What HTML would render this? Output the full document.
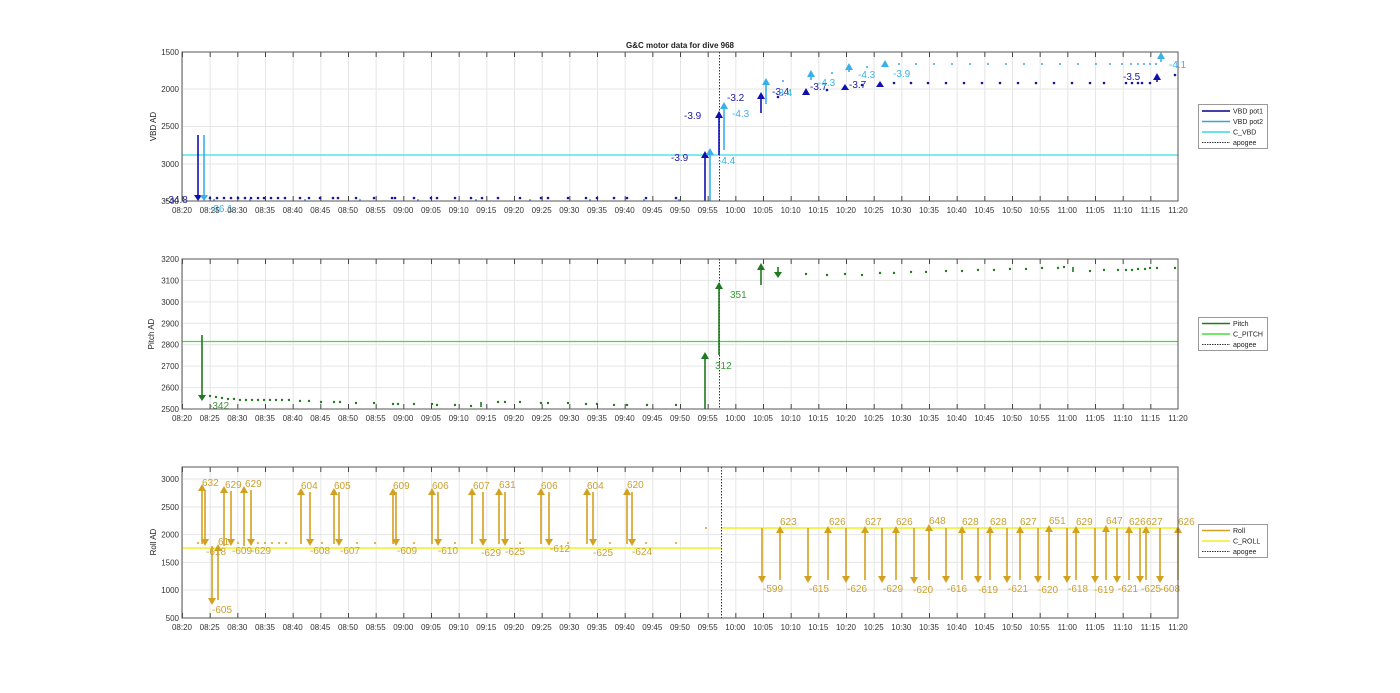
<!DOCTYPE html>
<html><head><meta charset="utf-8"><style>
html,body{margin:0;padding:0;background:#fff;width:1400px;height:693px;overflow:hidden}
svg{display:block;font-family:"Liberation Sans",sans-serif}
.t{font-size:8px;fill:#333}
.yl{font-size:8px;fill:#333}
.lg{font-size:7px;fill:#222}
</style></head><body>
<svg width="1400" height="693" viewBox="0 0 1400 693" xmlns="http://www.w3.org/2000/svg">
<defs>
<pattern id="vg" x="182" y="0" width="27.667" height="693" patternUnits="userSpaceOnUse"><line x1="0.5" y1="0" x2="0.5" y2="693" stroke="#e6e6e6" stroke-width="1"/></pattern>
<pattern id="tk1" x="182" y="52" width="27.667" height="149" patternUnits="userSpaceOnUse"><line x1="0.5" y1="0" x2="0.5" y2="5" stroke="#444"/><line x1="0.5" y1="144" x2="0.5" y2="149" stroke="#444"/></pattern>
<pattern id="tk2" x="182" y="259" width="27.667" height="150" patternUnits="userSpaceOnUse"><line x1="0.5" y1="0" x2="0.5" y2="5" stroke="#444"/><line x1="0.5" y1="145" x2="0.5" y2="150" stroke="#444"/></pattern>
<pattern id="tk3" x="182" y="467" width="27.667" height="151" patternUnits="userSpaceOnUse"><line x1="0.5" y1="0" x2="0.5" y2="5" stroke="#444"/><line x1="0.5" y1="146" x2="0.5" y2="151" stroke="#444"/></pattern>
</defs>

<text x="680" y="48" text-anchor="middle" style="font-size:8px;font-weight:bold" fill="#222">G&amp;C motor data for dive 968</text>

<!-- ===== Axes 1 ===== -->
<rect x="182" y="52" width="996" height="149" fill="url(#vg)"/>
<g stroke="#e6e6e6"><line x1="182" y1="89" x2="1178" y2="89"/><line x1="182" y1="126.5" x2="1178" y2="126.5"/><line x1="182" y1="164" x2="1178" y2="164"/></g>
<rect x="182" y="52" width="996" height="149" fill="url(#tk1)"/>
<line x1="182" y1="155" x2="1178" y2="155" stroke="#33dde6" stroke-width="1.2"/>
<line x1="719.5" y1="52" x2="719.5" y2="201" stroke="#333" stroke-dasharray="1.5,1.5"/>
<!-- dots pot1 -->
<g fill="#1515a0">
<circle cx="210" cy="198" r="1.3"/><circle cx="217" cy="198" r="1.3"/><circle cx="224" cy="198" r="1.3"/><circle cx="231" cy="198" r="1.3"/><circle cx="238" cy="198" r="1.3"/><circle cx="245" cy="198" r="1.3"/><circle cx="251" cy="198" r="1.3"/><circle cx="258" cy="198" r="1.3"/><circle cx="264" cy="198" r="1.3"/><circle cx="271" cy="198" r="1.3"/><circle cx="278" cy="198" r="1.3"/><circle cx="285" cy="198" r="1.3"/><circle cx="300" cy="198" r="1.3"/><circle cx="309" cy="198" r="1.3"/><circle cx="320" cy="198" r="1.3"/><circle cx="333" cy="198" r="1.3"/><circle cx="338" cy="198" r="1.3"/><circle cx="356" cy="198" r="1.3"/><circle cx="374" cy="198" r="1.3"/><circle cx="392" cy="198" r="1.3"/><circle cx="395" cy="198" r="1.3"/><circle cx="414" cy="198" r="1.3"/><circle cx="431" cy="198" r="1.3"/><circle cx="437" cy="198" r="1.3"/><circle cx="455" cy="198" r="1.3"/><circle cx="471" cy="198" r="1.3"/><circle cx="482" cy="198" r="1.3"/><circle cx="498" cy="198" r="1.3"/><circle cx="520" cy="198" r="1.3"/><circle cx="541" cy="198" r="1.3"/><circle cx="548" cy="198" r="1.3"/><circle cx="568" cy="198" r="1.3"/><circle cx="586" cy="198" r="1.3"/><circle cx="597" cy="198" r="1.3"/><circle cx="614" cy="198" r="1.3"/><circle cx="627" cy="198" r="1.3"/><circle cx="646" cy="198" r="1.3"/><circle cx="676" cy="198" r="1.3"/>
<circle cx="778" cy="97" r="1.3"/><circle cx="827" cy="90" r="1.3"/><circle cx="862" cy="85" r="1.3"/><circle cx="894" cy="83" r="1.3"/><circle cx="911" cy="83" r="1.3"/><circle cx="928" cy="83" r="1.3"/><circle cx="946" cy="83" r="1.3"/><circle cx="964" cy="83" r="1.3"/><circle cx="982" cy="83" r="1.3"/><circle cx="1000" cy="83" r="1.3"/><circle cx="1018" cy="83" r="1.3"/><circle cx="1036" cy="83" r="1.3"/><circle cx="1054" cy="83" r="1.3"/><circle cx="1072" cy="83" r="1.3"/><circle cx="1090" cy="83" r="1.3"/><circle cx="1104" cy="83" r="1.3"/><circle cx="1126" cy="83" r="1.3"/><circle cx="1132" cy="83" r="1.3"/><circle cx="1138" cy="83" r="1.3"/><circle cx="1142" cy="83" r="1.3"/><circle cx="1150" cy="83" r="1.3"/><circle cx="1175" cy="75" r="1.3"/>
</g>
<g fill="#3aa8e6">
<circle cx="214" cy="200" r="1"/><circle cx="250" cy="200" r="1"/><circle cx="305" cy="200" r="1"/><circle cx="360" cy="200" r="1"/><circle cx="418" cy="200" r="1"/><circle cx="476" cy="200" r="1"/><circle cx="530" cy="200" r="1"/><circle cx="590" cy="200" r="1"/><circle cx="644" cy="200" r="1"/><circle cx="679" cy="200" r="1"/>
<circle cx="783" cy="81" r="1"/><circle cx="832" cy="73" r="1"/><circle cx="867" cy="67" r="1"/><circle cx="899" cy="64" r="1"/><circle cx="916" cy="64" r="1"/><circle cx="934" cy="64" r="1"/><circle cx="952" cy="64" r="1"/><circle cx="970" cy="64" r="1"/><circle cx="988" cy="64" r="1"/><circle cx="1006" cy="64" r="1"/><circle cx="1024" cy="64" r="1"/><circle cx="1042" cy="64" r="1"/><circle cx="1060" cy="64" r="1"/><circle cx="1078" cy="64" r="1"/><circle cx="1096" cy="64" r="1"/><circle cx="1110" cy="64" r="1"/><circle cx="1122" cy="64" r="1"/><circle cx="1131" cy="64" r="1"/><circle cx="1138" cy="64" r="1"/><circle cx="1144" cy="64" r="1"/><circle cx="1150" cy="64" r="1"/><circle cx="1156" cy="64" r="1"/>
</g>
<!-- pot1 arrows -->
<g stroke="#1010b0" stroke-width="1.6" fill="#1010b0">
<line x1="198" y1="135" x2="198" y2="196"/><polygon points="194,195 202,195 198,201" stroke="none"/>
<line x1="705" y1="201" x2="705" y2="157"/><polygon points="701,158 709,158 705,151" stroke="none"/>
<line x1="719" y1="155" x2="719" y2="117"/><polygon points="715,118 723,118 719,111" stroke="none"/>
<line x1="761" y1="113" x2="761" y2="98"/><polygon points="757,99 765,99 761,92" stroke="none"/>
<polygon points="802,95 810,95 806,88" stroke="none"/>
<polygon points="841,90 849,90 845,84" stroke="none"/>
<polygon points="876,87 884,87 880,81" stroke="none"/>
<line x1="1157" y1="82" x2="1157" y2="78"/><polygon points="1153,80 1161,80 1157,73" stroke="none"/>
</g>
<g stroke="#39b0ea" stroke-width="1.6" fill="#39b0ea">
<line x1="204" y1="135" x2="204" y2="196"/><polygon points="200,195 208,195 204,201" stroke="none"/>
<line x1="710" y1="201" x2="710" y2="154"/><polygon points="706,155 714,155 710,148" stroke="none"/>
<line x1="724" y1="150" x2="724" y2="108"/><polygon points="720,109 728,109 724,102" stroke="none"/>
<line x1="766" y1="104" x2="766" y2="84"/><polygon points="762,85 770,85 766,78" stroke="none"/>
<line x1="811" y1="80" x2="811" y2="76"/><polygon points="807,77 815,77 811,70" stroke="none"/>
<line x1="849" y1="72" x2="849" y2="68"/><polygon points="845,70 853,70 849,63" stroke="none"/>
<polygon points="881,67 889,67 885,60" stroke="none"/>
<line x1="1161" y1="62" x2="1161" y2="58"/><polygon points="1157,59 1165,59 1161,52" stroke="none"/>
</g>
<g style="font-size:10px" fill="#1818a8">
<text x="165" y="203">-34.8</text><text x="671" y="161">-3.9</text><text x="684" y="119">-3.9</text><text x="727" y="101">-3.2</text><text x="772" y="95">-3.4</text><text x="810" y="90">-3.7</text><text x="849" y="88">-3.7</text><text x="1123" y="80">-3.5</text>
</g>
<g style="font-size:10px" fill="#3ab4ea">
<text x="210" y="212">-36.1</text><text x="718" y="164">-4.4</text><text x="732" y="117">-4.3</text><text x="775" y="96">-3.4</text><text x="818" y="86">-4.3</text><text x="858" y="78">-4.3</text><text x="893" y="77">-3.9</text><text x="1169" y="68">-4.1</text>
</g>
<rect x="182" y="52" width="996" height="149" fill="none" stroke="#555" stroke-width="1"/>
<g class="yl" text-anchor="end"><text x="179" y="55">1500</text><text x="179" y="92">2000</text><text x="179" y="129">2500</text><text x="179" y="167">3000</text><text x="179" y="204">3500</text></g>
<text transform="translate(156,126.5) rotate(-90)" text-anchor="middle" style="font-size:8px" fill="#222">VBD AD</text>
<g class="t" text-anchor="middle">
<text x="182" y="213">08:20</text><text x="209.7" y="213">08:25</text><text x="237.3" y="213">08:30</text><text x="265" y="213">08:35</text><text x="292.7" y="213">08:40</text><text x="320.3" y="213">08:45</text><text x="348" y="213">08:50</text><text x="375.7" y="213">08:55</text><text x="403.3" y="213">09:00</text><text x="431" y="213">09:05</text><text x="458.7" y="213">09:10</text><text x="486.3" y="213">09:15</text><text x="514" y="213">09:20</text><text x="541.7" y="213">09:25</text><text x="569.3" y="213">09:30</text><text x="597" y="213">09:35</text><text x="624.7" y="213">09:40</text><text x="652.3" y="213">09:45</text><text x="680" y="213">09:50</text><text x="707.7" y="213">09:55</text><text x="735.3" y="213">10:00</text><text x="763" y="213">10:05</text><text x="790.7" y="213">10:10</text><text x="818.3" y="213">10:15</text><text x="846" y="213">10:20</text><text x="873.7" y="213">10:25</text><text x="901.3" y="213">10:30</text><text x="929" y="213">10:35</text><text x="956.7" y="213">10:40</text><text x="984.3" y="213">10:45</text><text x="1012" y="213">10:50</text><text x="1039.7" y="213">10:55</text><text x="1067.3" y="213">11:00</text><text x="1095" y="213">11:05</text><text x="1122.7" y="213">11:10</text><text x="1150.3" y="213">11:15</text><text x="1178" y="213">11:20</text>
</g>
<!-- legend 1 -->
<rect x="1198.5" y="104.5" width="69" height="44" fill="#fff" stroke="#999"/>
<line x1="1202" y1="111" x2="1230" y2="111" stroke="#00008b" stroke-width="1.5"/><text class="lg" x="1233" y="113.5">VBD pot1</text>
<line x1="1202" y1="121.5" x2="1230" y2="121.5" stroke="#3aa0e0" stroke-width="1.5"/><text class="lg" x="1233" y="124">VBD pot2</text>
<line x1="1202" y1="132" x2="1230" y2="132" stroke="#33dde6" stroke-width="1.5"/><text class="lg" x="1233" y="134.5">C_VBD</text>
<line x1="1202" y1="142.5" x2="1230" y2="142.5" stroke="#333" stroke-dasharray="1.5,1"/><text class="lg" x="1233" y="145">apogee</text>

<!-- ===== Axes 2 ===== -->
<rect x="182" y="259" width="996" height="150" fill="url(#vg)"/>
<g stroke="#e6e6e6"><line x1="182" y1="280.4" x2="1178" y2="280.4"/><line x1="182" y1="301.9" x2="1178" y2="301.9"/><line x1="182" y1="323.3" x2="1178" y2="323.3"/><line x1="182" y1="344.7" x2="1178" y2="344.7"/><line x1="182" y1="366.1" x2="1178" y2="366.1"/><line x1="182" y1="387.6" x2="1178" y2="387.6"/></g>
<rect x="182" y="259" width="996" height="150" fill="url(#tk2)"/>
<line x1="182" y1="341.5" x2="1178" y2="341.5" stroke="#3ee03e" stroke-width="1.2"/>
<line x1="719.5" y1="259" x2="719.5" y2="409" stroke="#333" stroke-dasharray="1.5,1.5"/>
<g fill="#1f7a1f">
<circle cx="210" cy="396" r="1.2"/><circle cx="216" cy="397" r="1.2"/><circle cx="222" cy="398" r="1.2"/><circle cx="228" cy="399" r="1.2"/><circle cx="234" cy="399" r="1.2"/><circle cx="240" cy="400" r="1.2"/><circle cx="246" cy="400" r="1.2"/><circle cx="252" cy="400" r="1.2"/><circle cx="258" cy="400" r="1.2"/><circle cx="264" cy="400" r="1.2"/><circle cx="270" cy="400" r="1.2"/><circle cx="276" cy="400" r="1.2"/><circle cx="282" cy="400" r="1.2"/><circle cx="289" cy="400" r="1.2"/><circle cx="300" cy="401" r="1.2"/><circle cx="309" cy="401" r="1.2"/><circle cx="321" cy="402" r="1.2"/><circle cx="334" cy="402" r="1.2"/><circle cx="340" cy="402" r="1.2"/><circle cx="356" cy="403" r="1.2"/><circle cx="374" cy="403" r="1.2"/><circle cx="393" cy="404" r="1.2"/><circle cx="398" cy="404" r="1.2"/><circle cx="414" cy="404" r="1.2"/><circle cx="432" cy="404" r="1.2"/><circle cx="437" cy="405" r="1.2"/><circle cx="455" cy="405" r="1.2"/><circle cx="471" cy="406" r="1.2"/><circle cx="498" cy="402" r="1.2"/><circle cx="505" cy="402" r="1.2"/><circle cx="520" cy="402" r="1.2"/><circle cx="541" cy="403" r="1.2"/><circle cx="548" cy="403" r="1.2"/><circle cx="568" cy="403" r="1.2"/><circle cx="586" cy="404" r="1.2"/><circle cx="597" cy="404" r="1.2"/><circle cx="614" cy="405" r="1.2"/><circle cx="627" cy="405" r="1.2"/><circle cx="647" cy="405" r="1.2"/><circle cx="676" cy="405" r="1.2"/>
<circle cx="806" cy="274" r="1.2"/><circle cx="827" cy="275" r="1.2"/><circle cx="845" cy="274" r="1.2"/><circle cx="862" cy="275" r="1.2"/><circle cx="880" cy="273" r="1.2"/><circle cx="894" cy="273" r="1.2"/><circle cx="911" cy="272" r="1.2"/><circle cx="926" cy="272" r="1.2"/><circle cx="946" cy="271" r="1.2"/><circle cx="962" cy="271" r="1.2"/><circle cx="978" cy="270" r="1.2"/><circle cx="994" cy="270" r="1.2"/><circle cx="1010" cy="269" r="1.2"/><circle cx="1026" cy="269" r="1.2"/><circle cx="1042" cy="268" r="1.2"/><circle cx="1058" cy="268" r="1.2"/><circle cx="1064" cy="267" r="1.2"/><circle cx="1090" cy="271" r="1.2"/><circle cx="1104" cy="270" r="1.2"/><circle cx="1118" cy="270" r="1.2"/><circle cx="1126" cy="270" r="1.2"/><circle cx="1132" cy="270" r="1.2"/><circle cx="1138" cy="269" r="1.2"/><circle cx="1145" cy="269" r="1.2"/><circle cx="1150" cy="268" r="1.2"/><circle cx="1157" cy="268" r="1.2"/><circle cx="1175" cy="268" r="1.2"/>
</g>
<g stroke="#1f7a1f" stroke-width="1.6" fill="#1f7a1f">
<line x1="202" y1="335" x2="202" y2="396"/><polygon points="198,395 206,395 202,401" stroke="none"/>
<line x1="705" y1="409" x2="705" y2="358"/><polygon points="701,359 709,359 705,352" stroke="none"/>
<line x1="719" y1="355" x2="719" y2="288"/><polygon points="715,289 723,289 719,282" stroke="none"/>
<line x1="761" y1="285" x2="761" y2="269"/><polygon points="757,270 765,270 761,263" stroke="none"/>
<line x1="778" y1="267" x2="778" y2="273"/><polygon points="774,272 782,272 778,278" stroke="none"/>
<line x1="481" y1="407" x2="481" y2="402"/>
<line x1="1073" y1="267" x2="1073" y2="272"/>
</g>
<g style="font-size:10px" fill="#3a9a3a"><text x="209" y="409">-342</text><text x="715" y="369">312</text><text x="730" y="298">351</text></g>
<rect x="182" y="259" width="996" height="150" fill="none" stroke="#555"/>
<g class="yl" text-anchor="end"><text x="179" y="262">3200</text><text x="179" y="283.4">3100</text><text x="179" y="304.9">3000</text><text x="179" y="326.3">2900</text><text x="179" y="347.7">2800</text><text x="179" y="369.1">2700</text><text x="179" y="390.6">2600</text><text x="179" y="412">2500</text></g>
<text transform="translate(154,334) rotate(-90)" text-anchor="middle" style="font-size:8px" fill="#222">Pitch AD</text>
<g class="t" text-anchor="middle">
<text x="182" y="421">08:20</text><text x="209.7" y="421">08:25</text><text x="237.3" y="421">08:30</text><text x="265" y="421">08:35</text><text x="292.7" y="421">08:40</text><text x="320.3" y="421">08:45</text><text x="348" y="421">08:50</text><text x="375.7" y="421">08:55</text><text x="403.3" y="421">09:00</text><text x="431" y="421">09:05</text><text x="458.7" y="421">09:10</text><text x="486.3" y="421">09:15</text><text x="514" y="421">09:20</text><text x="541.7" y="421">09:25</text><text x="569.3" y="421">09:30</text><text x="597" y="421">09:35</text><text x="624.7" y="421">09:40</text><text x="652.3" y="421">09:45</text><text x="680" y="421">09:50</text><text x="707.7" y="421">09:55</text><text x="735.3" y="421">10:00</text><text x="763" y="421">10:05</text><text x="790.7" y="421">10:10</text><text x="818.3" y="421">10:15</text><text x="846" y="421">10:20</text><text x="873.7" y="421">10:25</text><text x="901.3" y="421">10:30</text><text x="929" y="421">10:35</text><text x="956.7" y="421">10:40</text><text x="984.3" y="421">10:45</text><text x="1012" y="421">10:50</text><text x="1039.7" y="421">10:55</text><text x="1067.3" y="421">11:00</text><text x="1095" y="421">11:05</text><text x="1122.7" y="421">11:10</text><text x="1150.3" y="421">11:15</text><text x="1178" y="421">11:20</text>
</g>
<rect x="1198.5" y="317.5" width="69" height="33" fill="#fff" stroke="#999"/>
<line x1="1202" y1="323.5" x2="1230" y2="323.5" stroke="#1f7a1f" stroke-width="1.5"/><text class="lg" x="1233" y="326">Pitch</text>
<line x1="1202" y1="334" x2="1230" y2="334" stroke="#3ee03e" stroke-width="1.5"/><text class="lg" x="1233" y="336.5">C_PITCH</text>
<line x1="1202" y1="344.5" x2="1230" y2="344.5" stroke="#333" stroke-dasharray="1.5,1"/><text class="lg" x="1233" y="347">apogee</text>

<!-- ===== Axes 3 ===== -->
<rect x="182" y="467" width="996" height="151" fill="url(#vg)"/>
<g stroke="#e6e6e6"><line x1="182" y1="479" x2="1178" y2="479"/><line x1="182" y1="507" x2="1178" y2="507"/><line x1="182" y1="534.6" x2="1178" y2="534.6"/><line x1="182" y1="562.4" x2="1178" y2="562.4"/><line x1="182" y1="590" x2="1178" y2="590"/></g>
<rect x="182" y="467" width="996" height="151" fill="url(#tk3)"/>
<line x1="182" y1="548" x2="721" y2="548" stroke="#f0f020" stroke-width="1.4"/>
<line x1="721" y1="528" x2="1178" y2="528" stroke="#f0f020" stroke-width="1.4"/>
<line x1="721.5" y1="467" x2="721.5" y2="618" stroke="#333" stroke-dasharray="1.5,1.5"/>
<g fill="#d4a020">
<circle cx="198" cy="543" r="1"/><circle cx="238" cy="543" r="1"/><circle cx="258" cy="543" r="1"/><circle cx="265" cy="543" r="1"/><circle cx="272" cy="543" r="1"/><circle cx="279" cy="543" r="1"/><circle cx="286" cy="543" r="1"/><circle cx="322" cy="543" r="1"/><circle cx="357" cy="543" r="1"/><circle cx="375" cy="543" r="1"/><circle cx="414" cy="543" r="1"/><circle cx="455" cy="543" r="1"/><circle cx="520" cy="543" r="1"/><circle cx="568" cy="543" r="1"/><circle cx="610" cy="543" r="1"/><circle cx="646" cy="543" r="1"/><circle cx="676" cy="543" r="1"/><circle cx="706" cy="528" r="1"/>
</g>
<g stroke="#d4a020" stroke-width="1.6" fill="#d4a020">
<!-- left: up arrows -->
<line x1="202" y1="544" x2="202" y2="490"/><polygon points="198,491 206,491 202,484" stroke="none"/>
<line x1="218" y1="600" x2="218" y2="550"/><polygon points="214,551 222,551 218,544" stroke="none"/>
<line x1="224" y1="546" x2="224" y2="492"/><polygon points="220,493 228,493 224,486" stroke="none"/>
<line x1="244" y1="546" x2="244" y2="492"/><polygon points="240,493 248,493 244,486" stroke="none"/>
<line x1="301" y1="544" x2="301" y2="494"/><polygon points="297,495 305,495 301,488" stroke="none"/>
<line x1="334" y1="544" x2="334" y2="494"/><polygon points="330,495 338,495 334,488" stroke="none"/>
<line x1="393" y1="544" x2="393" y2="494"/><polygon points="389,495 397,495 393,488" stroke="none"/>
<line x1="432" y1="544" x2="432" y2="494"/><polygon points="428,495 436,495 432,488" stroke="none"/>
<line x1="472" y1="544" x2="472" y2="494"/><polygon points="468,495 476,495 472,488" stroke="none"/>
<line x1="499" y1="544" x2="499" y2="494"/><polygon points="495,495 503,495 499,488" stroke="none"/>
<line x1="541" y1="544" x2="541" y2="494"/><polygon points="537,495 545,495 541,488" stroke="none"/>
<line x1="587" y1="544" x2="587" y2="494"/><polygon points="583,495 591,495 587,488" stroke="none"/>
<line x1="627" y1="544" x2="627" y2="494"/><polygon points="623,495 631,495 627,488" stroke="none"/>
<!-- left: down arrows -->
<line x1="205" y1="490" x2="205" y2="540"/><polygon points="201,539 209,539 205,546" stroke="none"/>
<line x1="212" y1="546" x2="212" y2="599"/><polygon points="208,598 216,598 212,605" stroke="none"/>
<line x1="231" y1="491" x2="231" y2="540"/><polygon points="227,539 235,539 231,546" stroke="none"/>
<line x1="251" y1="490" x2="251" y2="540"/><polygon points="247,539 255,539 251,546" stroke="none"/>
<line x1="310" y1="492" x2="310" y2="540"/><polygon points="306,539 314,539 310,546" stroke="none"/>
<line x1="339" y1="492" x2="339" y2="540"/><polygon points="335,539 343,539 339,546" stroke="none"/>
<line x1="396" y1="492" x2="396" y2="540"/><polygon points="392,539 400,539 396,546" stroke="none"/>
<line x1="438" y1="492" x2="438" y2="540"/><polygon points="434,539 442,539 438,546" stroke="none"/>
<line x1="483" y1="492" x2="483" y2="540"/><polygon points="479,539 487,539 483,546" stroke="none"/>
<line x1="505" y1="492" x2="505" y2="540"/><polygon points="501,539 509,539 505,546" stroke="none"/>
<line x1="549" y1="492" x2="549" y2="540"/><polygon points="545,539 553,539 549,546" stroke="none"/>
<line x1="593" y1="492" x2="593" y2="540"/><polygon points="589,539 597,539 593,546" stroke="none"/>
<line x1="632" y1="492" x2="632" y2="540"/><polygon points="628,539 636,539 632,546" stroke="none"/>
<!-- right: down arrows -->
<line x1="762" y1="528" x2="762" y2="577"/><polygon points="758,576 766,576 762,583" stroke="none"/>
<line x1="808" y1="528" x2="808" y2="577"/><polygon points="804,576 812,576 808,583" stroke="none"/>
<line x1="846" y1="528" x2="846" y2="577"/><polygon points="842,576 850,576 846,583" stroke="none"/>
<line x1="882" y1="528" x2="882" y2="577"/><polygon points="878,576 886,576 882,583" stroke="none"/>
<line x1="914" y1="528" x2="914" y2="578"/><polygon points="910,577 918,577 914,584" stroke="none"/>
<line x1="946" y1="528" x2="946" y2="577"/><polygon points="942,576 950,576 946,583" stroke="none"/>
<line x1="978" y1="528" x2="978" y2="577"/><polygon points="974,576 982,576 978,583" stroke="none"/>
<line x1="1007" y1="528" x2="1007" y2="577"/><polygon points="1003,576 1011,576 1007,583" stroke="none"/>
<line x1="1038" y1="528" x2="1038" y2="577"/><polygon points="1034,576 1042,576 1038,583" stroke="none"/>
<line x1="1067" y1="528" x2="1067" y2="577"/><polygon points="1063,576 1071,576 1067,583" stroke="none"/>
<line x1="1095" y1="528" x2="1095" y2="577"/><polygon points="1091,576 1099,576 1095,583" stroke="none"/>
<line x1="1117" y1="528" x2="1117" y2="577"/><polygon points="1113,576 1121,576 1117,583" stroke="none"/>
<line x1="1140" y1="528" x2="1140" y2="577"/><polygon points="1136,576 1144,576 1140,583" stroke="none"/>
<line x1="1160" y1="528" x2="1160" y2="577"/><polygon points="1156,576 1164,576 1160,583" stroke="none"/>
<!-- right: up arrows -->
<line x1="780" y1="580" x2="780" y2="532"/><polygon points="776,533 784,533 780,526" stroke="none"/>
<line x1="828" y1="580" x2="828" y2="532"/><polygon points="824,533 832,533 828,526" stroke="none"/>
<line x1="865" y1="580" x2="865" y2="532"/><polygon points="861,533 869,533 865,526" stroke="none"/>
<line x1="896" y1="580" x2="896" y2="532"/><polygon points="892,533 900,533 896,526" stroke="none"/>
<line x1="929" y1="580" x2="929" y2="530"/><polygon points="925,531 933,531 929,524" stroke="none"/>
<line x1="962" y1="580" x2="962" y2="532"/><polygon points="958,533 966,533 962,526" stroke="none"/>
<line x1="990" y1="580" x2="990" y2="532"/><polygon points="986,533 994,533 990,526" stroke="none"/>
<line x1="1020" y1="580" x2="1020" y2="532"/><polygon points="1016,533 1024,533 1020,526" stroke="none"/>
<line x1="1049" y1="580" x2="1049" y2="531"/><polygon points="1045,532 1053,532 1049,525" stroke="none"/>
<line x1="1076" y1="580" x2="1076" y2="532"/><polygon points="1072,533 1080,533 1076,526" stroke="none"/>
<line x1="1106" y1="580" x2="1106" y2="531"/><polygon points="1102,532 1110,532 1106,525" stroke="none"/>
<line x1="1129" y1="580" x2="1129" y2="532"/><polygon points="1125,533 1133,533 1129,526" stroke="none"/>
<line x1="1146" y1="580" x2="1146" y2="532"/><polygon points="1142,533 1150,533 1146,526" stroke="none"/>
<line x1="1178" y1="580" x2="1178" y2="532"/><polygon points="1174,533 1182,533 1178,526" stroke="none"/>
</g>
<g style="font-size:10px" fill="#c9a030">
<text x="202" y="486">632</text><text x="225" y="488">629</text><text x="245" y="487">629</text><text x="301" y="489">604</text><text x="334" y="489">605</text><text x="393" y="489">609</text><text x="432" y="489">606</text><text x="473" y="489">607</text><text x="499" y="488">631</text><text x="541" y="489">606</text><text x="587" y="489">604</text><text x="627" y="488">620</text><text x="218" y="545">61</text>
<text x="206" y="555">-618</text><text x="212" y="613">-605</text><text x="232" y="554">-609</text><text x="251" y="554">-629</text><text x="310" y="554">-608</text><text x="340" y="554">-607</text><text x="397" y="554">-609</text><text x="438" y="554">-610</text><text x="481" y="556">-629</text><text x="505" y="555">-625</text><text x="550" y="552">-612</text><text x="593" y="556">-625</text><text x="632" y="555">-624</text>
<text x="780" y="525">623</text><text x="829" y="525">626</text><text x="865" y="525">627</text><text x="896" y="525">626</text><text x="929" y="524">648</text><text x="962" y="525">628</text><text x="990" y="525">628</text><text x="1020" y="525">627</text><text x="1049" y="524">651</text><text x="1076" y="525">629</text><text x="1106" y="524">647</text><text x="1129" y="525">626</text><text x="1146" y="525">627</text><text x="1178" y="525">626</text>
<text x="763" y="592">-599</text><text x="809" y="592">-615</text><text x="847" y="592">-626</text><text x="883" y="592">-629</text><text x="913" y="593">-620</text><text x="947" y="592">-616</text><text x="978" y="593">-619</text><text x="1008" y="592">-621</text><text x="1038" y="593">-620</text><text x="1068" y="592">-618</text><text x="1094" y="593">-619</text><text x="1118" y="592">-621</text><text x="1141" y="592">-625</text><text x="1160" y="592">-608</text>
</g>
<rect x="182" y="467" width="996" height="151" fill="none" stroke="#555"/>
<g class="yl" text-anchor="end"><text x="179" y="482">3000</text><text x="179" y="510">2500</text><text x="179" y="537.6">2000</text><text x="179" y="565.4">1500</text><text x="179" y="593">1000</text><text x="179" y="621">500</text></g>
<text transform="translate(156,542) rotate(-90)" text-anchor="middle" style="font-size:8px" fill="#222">Roll AD</text>
<g class="t" text-anchor="middle">
<text x="182" y="630">08:20</text><text x="209.7" y="630">08:25</text><text x="237.3" y="630">08:30</text><text x="265" y="630">08:35</text><text x="292.7" y="630">08:40</text><text x="320.3" y="630">08:45</text><text x="348" y="630">08:50</text><text x="375.7" y="630">08:55</text><text x="403.3" y="630">09:00</text><text x="431" y="630">09:05</text><text x="458.7" y="630">09:10</text><text x="486.3" y="630">09:15</text><text x="514" y="630">09:20</text><text x="541.7" y="630">09:25</text><text x="569.3" y="630">09:30</text><text x="597" y="630">09:35</text><text x="624.7" y="630">09:40</text><text x="652.3" y="630">09:45</text><text x="680" y="630">09:50</text><text x="707.7" y="630">09:55</text><text x="735.3" y="630">10:00</text><text x="763" y="630">10:05</text><text x="790.7" y="630">10:10</text><text x="818.3" y="630">10:15</text><text x="846" y="630">10:20</text><text x="873.7" y="630">10:25</text><text x="901.3" y="630">10:30</text><text x="929" y="630">10:35</text><text x="956.7" y="630">10:40</text><text x="984.3" y="630">10:45</text><text x="1012" y="630">10:50</text><text x="1039.7" y="630">10:55</text><text x="1067.3" y="630">11:00</text><text x="1095" y="630">11:05</text><text x="1122.7" y="630">11:10</text><text x="1150.3" y="630">11:15</text><text x="1178" y="630">11:20</text>
</g>
<rect x="1198.5" y="524.5" width="69" height="33" fill="#fff" stroke="#999"/>
<line x1="1202" y1="530.5" x2="1230" y2="530.5" stroke="#d4a020" stroke-width="1.5"/><text class="lg" x="1233" y="533">Roll</text>
<line x1="1202" y1="541" x2="1230" y2="541" stroke="#f0f020" stroke-width="1.5"/><text class="lg" x="1233" y="543.5">C_ROLL</text>
<line x1="1202" y1="551.5" x2="1230" y2="551.5" stroke="#333" stroke-dasharray="1.5,1"/><text class="lg" x="1233" y="554">apogee</text>
</svg>
</body></html>
